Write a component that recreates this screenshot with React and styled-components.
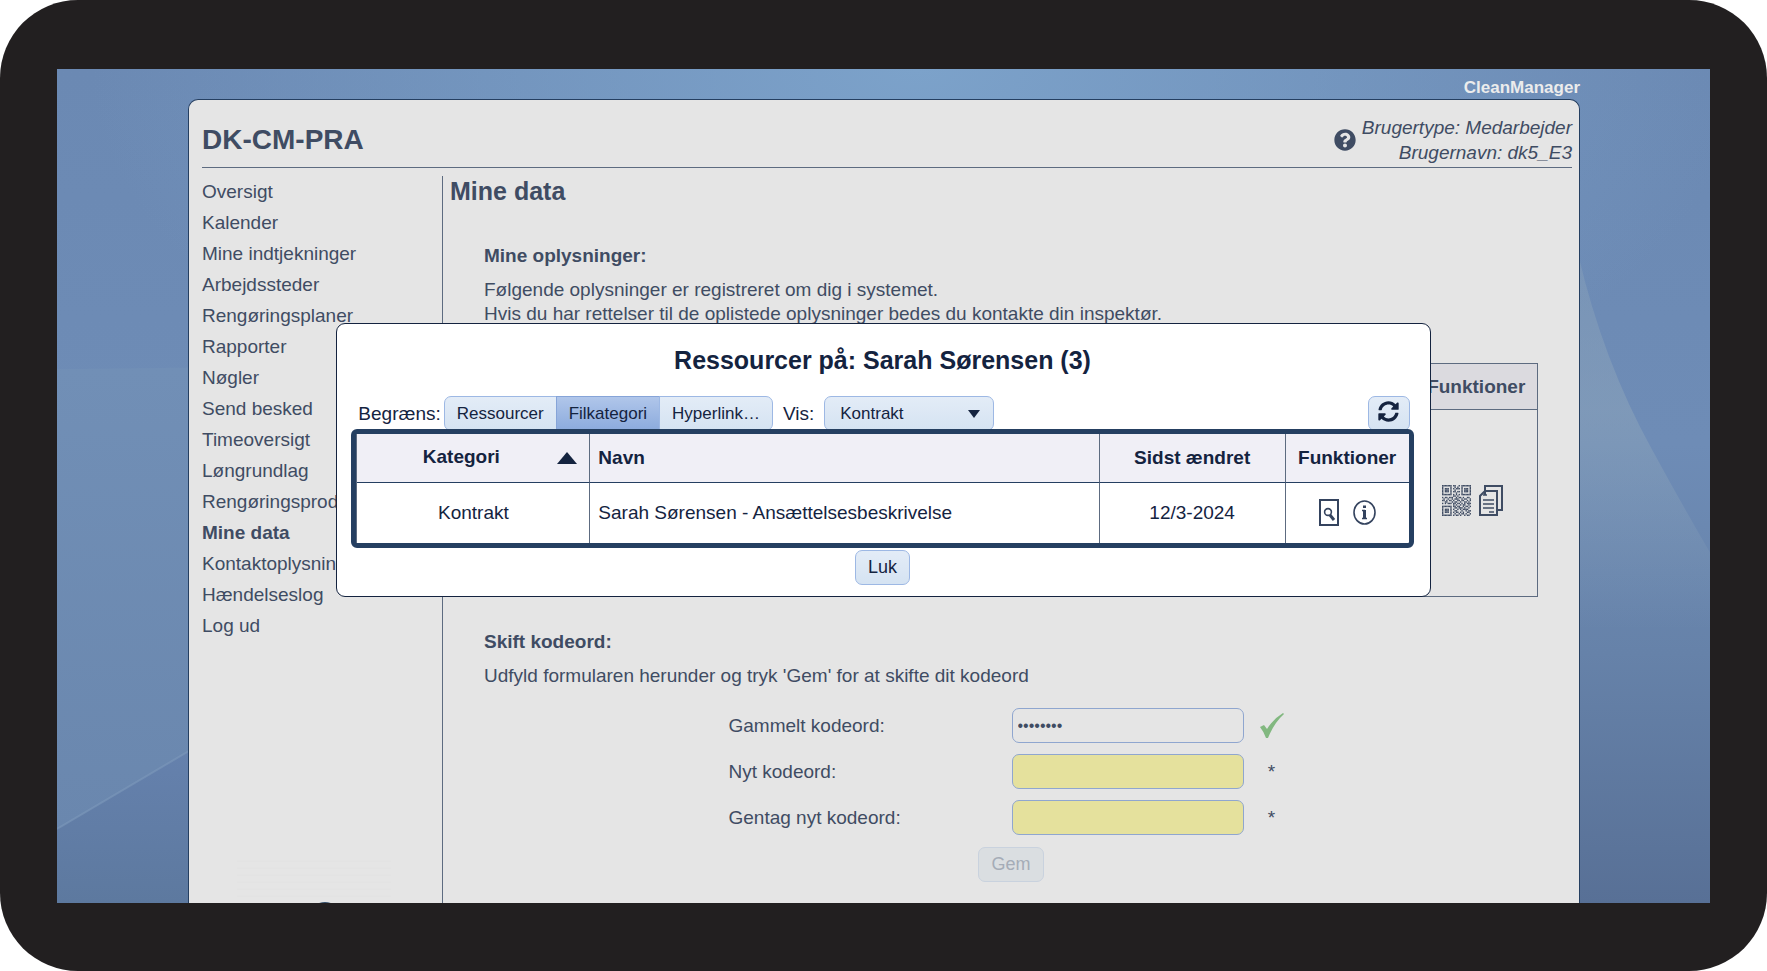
import React, { useState } from "react";
import styled, { createGlobalStyle, css } from "styled-components";
import { FaQuestionCircle, FaSyncAlt } from "react-icons/fa";

const COLOR = {
  BEZEL: "#221f20",
  PANEL: "#e5e5e5",
  NAVY: "#14233f",
  FRAME: "#253f61",
  DIMMED: "#3f4c63",
  ICON: "#34435e",
  LINE: "#5d6b80",
  BUTTON_BORDER: "#9db8e4",
};

const NAV_ITEMS = [
  "Oversigt",
  "Kalender",
  "Mine indtjekninger",
  "Arbejdssteder",
  "Rengøringsplaner",
  "Rapporter",
  "Nøgler",
  "Send besked",
  "Timeoversigt",
  "Løngrundlag",
  "Rengøringsprodukter",
  "Mine data",
  "Kontaktoplysninger",
  "Hændelseslog",
  "Log ud",
];

const FILTERS = ["Ressourcer", "Filkategori", "Hyperlink…"];

const RESOURCES = [
  {
    category: "Kontrakt",
    name: "Sarah Sørensen - Ansættelsesbeskrivelse",
    changed: "12/3-2024",
  },
];

// 1 = dark module
const QR_ROWS = [
  "111111101100101111111",
  "100000100101001000001",
  "101110101011101011101",
  "101110100100001011101",
  "101110101101101011101",
  "100000100010001000001",
  "111111101010101111111",
  "000000001101000000000",
  "101101110010110100110",
  "010010010111001011001",
  "110101101001101100101",
  "001100010110010011010",
  "101011101101101010111",
  "000000001010010110010",
  "111111101101100101101",
  "100000100110111010010",
  "101110101001010111100",
  "101110100110001001011",
  "101110101011010100110",
  "100000100100101101001",
  "111111101011010010110",
];

const Wallpaper = () => (
  <StyledWallpaper
    viewBox="0 0 1653 833"
    preserveAspectRatio="none"
    aria-hidden="true"
  >
    <defs>
      <linearGradient id="base" x1="0" y1="0" x2="0" y2="1">
        <stop offset="0" stopColor="#6b89b3" />
        <stop offset="0.45" stopColor="#6e8cb6" />
        <stop offset="0.7" stopColor="#6682a9" />
        <stop offset="1" stopColor="#587096" />
      </linearGradient>
      <radialGradient id="glow" cx="0.52" cy="0" r="0.5">
        <stop offset="0" stopColor="#7ca2ca" />
        <stop offset="1" stopColor="#7ca2ca" stopOpacity="0" />
      </radialGradient>
      <linearGradient id="band" x1="0" y1="299" x2="0" y2="760" gradientUnits="userSpaceOnUse">
        <stop offset="0" stopColor="#718fb6" />
        <stop offset="1" stopColor="#6a87ae" />
      </linearGradient>
      <linearGradient id="floor" x1="0" y1="682" x2="0" y2="833" gradientUnits="userSpaceOnUse">
        <stop offset="0" stopColor="#6581ad" />
        <stop offset="1" stopColor="#5d799f" />
      </linearGradient>
      <linearGradient id="ray" x1="0" y1="194" x2="0" y2="560" gradientUnits="userSpaceOnUse">
        <stop offset="0" stopColor="#8fa6bb" stopOpacity="0.35" />
        <stop offset="0.4" stopColor="#8fa6bb" stopOpacity="0.5" />
        <stop offset="1" stopColor="#8fa6bb" stopOpacity="0" />
      </linearGradient>
    </defs>
    <rect width="1653" height="833" fill="url(#base)" />
    <rect width="1653" height="833" fill="url(#glow)" />
    <path d="M0 300L300 296V620L0 759Z" fill="url(#band)" />
    <path d="M0 759L200 641V833H0Z" fill="url(#floor)" />
    <path d="M0 759L200 641" stroke="#7d99bb" strokeWidth="2" opacity="0.6" />
    <path d="M1520 180Q1545 290 1595 380Q1625 435 1653 483V560H1520Z" fill="url(#ray)" />
  </StyledWallpaper>
);

const QrIcon = () => (
  <svg width="29" height="31" viewBox="0 0 21 21" preserveAspectRatio="none">
    {QR_ROWS.map((row, y) =>
      [...row].map(
        (cell, x) =>
          cell === "1" && (
            <rect key={`${x}-${y}`} x={x} y={y} width="1" height="1" fill="currentColor" />
          )
      )
    )}
  </svg>
);

const CopyIcon = () => (
  <svg width="24" height="31" viewBox="0 0 24 31" fill="none" stroke="currentColor" strokeWidth="2">
    <path d="M6 10V1H23V25H18" />
    <path d="M6 6H18V30H1V11Z" />
    <path d="M4 10H8M4 15H15M4 19H15M4 23H15M10 27H15" strokeWidth="1.6" />
  </svg>
);

const PreviewIcon = () => (
  <svg width="20" height="27" viewBox="0 0 20 27" fill="none" stroke="currentColor">
    <rect x="1" y="1" width="18" height="25" strokeWidth="2" />
    <circle cx="9" cy="13" r="3.4" strokeWidth="1.6" />
    <path d="M11 16L15 21" strokeWidth="3" />
  </svg>
);

const InfoIcon = () => (
  <svg width="23" height="25" viewBox="0 0 23 25" fill="none" stroke="currentColor">
    <ellipse cx="11.5" cy="12.5" rx="10.5" ry="11.5" strokeWidth="1.6" />
    <path d="M9 10.5H12M9 18.5H14" strokeWidth="1.4" />
    <path d="M11.5 5.5V8M11.5 10V19" strokeWidth="3" />
  </svg>
);

const CheckMark = () => (
  <svg width="24" height="25" viewBox="0 0 24 25" role="img" aria-label="OK">
    <path d="M0 14L4 12L7 16Q13 6 23 0L24 1Q14 10 8 25H6Q4 19 0 14Z" fill="#82b880" />
  </svg>
);

const Nav = () => (
  <StyledSidebar>
    <StyledNavList>
      {NAV_ITEMS.map((item) => (
        <li key={item}>
          <StyledNavLink href="#" $active={item === "Mine data"}>
            {item}
          </StyledNavLink>
        </li>
      ))}
    </StyledNavList>
    <StyledLogo viewBox="0 0 154 44" aria-hidden="true">
      <path d="M0 2H154M0 9H154M0 16H154M0 23H154M0 30H154M0 37H154" stroke="#e2e2e2" />
      <circle cx="88" cy="59" r="16" fill="#344f6b" />
    </StyledLogo>
  </StyledSidebar>
);

const PasswordForm = () => (
  <StyledForm onSubmit={(event) => event.preventDefault()}>
    <StyledFormGrid>
      <label htmlFor="old">Gammelt kodeord:</label>
      <StyledInput id="old" type="password" defaultValue="kodeord1" />
      <StyledMark>
        <CheckMark />
      </StyledMark>
      <label htmlFor="new">Nyt kodeord:</label>
      <StyledInput id="new" type="password" $required />
      <StyledMark>*</StyledMark>
      <label htmlFor="repeat">Gentag nyt kodeord:</label>
      <StyledInput id="repeat" type="password" $required />
      <StyledMark>*</StyledMark>
    </StyledFormGrid>
    <StyledButton disabled>Gem</StyledButton>
  </StyledForm>
);

const ResourceDialog = () => {
  const [filter, setFilter] = useState("Filkategori");

  return (
    <StyledDialog role="dialog" aria-labelledby="dialog-title">
      <StyledDialogTitle id="dialog-title">
        Ressourcer på: Sarah Sørensen (3)
      </StyledDialogTitle>
      <StyledToolbar>
        <span>Begræns:</span>
        <StyledButtonGroup>
          {FILTERS.map((name) => (
            <StyledSegment
              key={name}
              type="button"
              $active={name === filter}
              onClick={() => setFilter(name)}
            >
              {name}
            </StyledSegment>
          ))}
        </StyledButtonGroup>
        <StyledShowLabel htmlFor="show">Vis:</StyledShowLabel>
        <StyledSelectWrapper>
          <StyledSelect id="show" defaultValue="Kontrakt">
            <option>Kontrakt</option>
          </StyledSelect>
          <StyledCaret viewBox="0 0 12 8" aria-hidden="true">
            <path d="M0 0H12L6 8Z" fill={COLOR.NAVY} />
          </StyledCaret>
        </StyledSelectWrapper>
        <StyledRefreshButton type="button" aria-label="Opdater">
          <FaSyncAlt size={21} />
        </StyledRefreshButton>
      </StyledToolbar>
      <StyledTableFrame>
        <StyledTable>
          <colgroup>
            <col width="233" />
            <col />
            <col width="186" />
            <col width="123" />
          </colgroup>
          <thead>
            <tr>
              <StyledTh>
                <StyledSortHeader>
                  <span>Kategori</span>
                  <svg width="20" height="12" viewBox="0 0 20 12">
                    <path d="M0 12L10 0L20 12Z" fill={COLOR.NAVY} />
                  </svg>
                </StyledSortHeader>
              </StyledTh>
              <StyledTh $left>Navn</StyledTh>
              <StyledTh>Sidst ændret</StyledTh>
              <StyledTh>Funktioner</StyledTh>
            </tr>
          </thead>
          <tbody>
            {RESOURCES.map(({ category, name, changed }) => (
              <tr key={name}>
                <StyledTd>{category}</StyledTd>
                <StyledTd $left>{name}</StyledTd>
                <StyledTd>{changed}</StyledTd>
                <StyledTd>
                  <StyledIconRow $gap={14}>
                    <StyledIconButton type="button" aria-label="Vis">
                      <PreviewIcon />
                    </StyledIconButton>
                    <StyledIconButton type="button" aria-label="Info">
                      <InfoIcon />
                    </StyledIconButton>
                  </StyledIconRow>
                </StyledTd>
              </tr>
            ))}
          </tbody>
        </StyledTable>
      </StyledTableFrame>
      <StyledButton type="button">Luk</StyledButton>
    </StyledDialog>
  );
};

const App = () => (
  <>
    <GlobalStyle />
    <StyledDevice>
      <StyledScreen>
        <Wallpaper />
        <StyledPage>
          <StyledBrand>CleanManager</StyledBrand>
          <StyledPanel>
            <StyledHeader>
              <StyledCompany>DK-CM-PRA</StyledCompany>
              <StyledUser>
                <FaQuestionCircle size={22} />
                <StyledUserText>
                  Brugertype: Medarbejder
                  <br />
                  Brugernavn: dk5_E3
                </StyledUserText>
              </StyledUser>
            </StyledHeader>
            <StyledBody>
              <Nav />
              <StyledMain>
                <StyledPageTitle>Mine data</StyledPageTitle>
                <StyledSection>
                  <StyledHeading>Mine oplysninger:</StyledHeading>
                  <StyledText>
                    Følgende oplysninger er registreret om dig i systemet.
                    <br />
                    Hvis du har rettelser til de oplistede oplysninger bedes du
                    kontakte din inspektør.
                  </StyledText>
                  <StyledDataTable>
                    <colgroup>
                      <col />
                      <col width="122" />
                    </colgroup>
                    <thead>
                      <tr>
                        <th />
                        <th>Funktioner</th>
                      </tr>
                    </thead>
                    <tbody>
                      <tr>
                        <td />
                        <td>
                          <StyledIconRow $gap={8}>
                            <QrIcon />
                            <CopyIcon />
                          </StyledIconRow>
                        </td>
                      </tr>
                    </tbody>
                  </StyledDataTable>
                  <StyledHeading>Skift kodeord:</StyledHeading>
                  <StyledText>
                    Udfyld formularen herunder og tryk 'Gem' for at skifte dit
                    kodeord
                  </StyledText>
                  <PasswordForm />
                </StyledSection>
              </StyledMain>
            </StyledBody>
          </StyledPanel>
        </StyledPage>
        <StyledOverlay>
          <ResourceDialog />
        </StyledOverlay>
      </StyledScreen>
    </StyledDevice>
  </>
);

export default App;

const GlobalStyle = createGlobalStyle`
  * {
    box-sizing: border-box;
  }

  body {
    margin: 0;
    background: #fff;
    font: 19px/24px "Liberation Sans", Arial, sans-serif;
    color: ${COLOR.DIMMED};
  }

  button, input, select {
    font-family: inherit;
  }

  svg {
    display: block;
    flex-shrink: 0;
  }
`;

const StyledDevice = styled.div`
  display: flex;
  height: 100vh;
  padding: 69px 57px 68px;
  border-radius: 78px;
  background: ${COLOR.BEZEL};
`;

const StyledScreen = styled.div`
  position: relative;
  display: flex;
  flex: 1;
  overflow: hidden;
`;

const StyledWallpaper = styled.svg`
  position: absolute;
  width: 100%;
  height: 100%;
`;

const StyledPage = styled.div`
  position: relative;
  display: flex;
  flex: 1;
  flex-direction: column;
  padding: 7px 130px 0 131px;
`;

const StyledBrand = styled.div`
  align-self: flex-end;
  color: #ececec;
  font-size: 17px;
  font-weight: bold;
  line-height: 23px;
`;

const StyledPanel = styled.div`
  display: flex;
  flex: 1;
  flex-direction: column;
  min-height: 0;
  border: 1px solid ${COLOR.FRAME};
  border-bottom: 0;
  border-radius: 10px 10px 0 0;
  background: ${COLOR.PANEL};
`;

const StyledHeader = styled.header`
  display: flex;
  align-items: center;
  justify-content: space-between;
  height: 68px;
  margin: 0 7px 8px 13px;
  padding-top: 13px;
  border-bottom: 1px solid ${COLOR.LINE};
`;

const StyledCompany = styled.div`
  font-size: 28px;
  font-weight: bold;
`;

const StyledUser = styled.div`
  display: flex;
  align-items: center;
  gap: 6px;
`;

const StyledUserText = styled.div`
  font-style: italic;
  line-height: 25px;
  text-align: right;
`;

const StyledBody = styled.div`
  display: flex;
  flex: 1;
  min-height: 0;
`;

const StyledSidebar = styled.nav`
  display: flex;
  flex-direction: column;
  justify-content: space-between;
  width: 254px;
  padding-left: 13px;
  border-right: 1px solid ${COLOR.LINE};
`;

const StyledNavList = styled.ul`
  margin: 0;
  padding: 0;
  list-style: none;
`;

const StyledNavLink = styled.a`
  display: block;
  color: inherit;
  font-weight: ${({ $active }) => ($active ? "bold" : "normal")};
  line-height: 31px;
  text-decoration: none;
`;

const StyledLogo = styled.svg`
  width: 154px;
  height: 44px;
  margin-left: 35px;
`;

const StyledMain = styled.main`
  flex: 1;
  padding: 0 41px 0 7px;
`;

const StyledPageTitle = styled.h1`
  margin: 0;
  font-size: 25px;
  line-height: 30px;
`;

const StyledSection = styled.section`
  margin: 38px 0 0 34px;
`;

const StyledHeading = styled.h2`
  margin: 0 0 10px;
  font-size: 19px;
  line-height: 24px;
`;

const StyledText = styled.p`
  margin: 0;
`;

const StyledDataTable = styled.table`
  width: 100%;
  height: 234px;
  margin: 37px 0 33px;
  border: 1px solid ${COLOR.LINE};
  border-collapse: collapse;
  table-layout: fixed;

  th {
    height: 46px;
    padding: 0;
    border-bottom: 1px solid ${COLOR.LINE};
    background: #dbdadf;
  }

  td {
    padding: 0 8px 6px 0;
  }
`;

const StyledForm = styled.form`
  display: flex;
  flex-direction: column;
  align-items: center;
  gap: 12px;
  margin-top: 20px;
`;

const StyledFormGrid = styled.div`
  display: grid;
  grid-template-columns: 283px 232px 50px;
  align-items: center;
  gap: 11px 0;
`;

const StyledInput = styled.input`
  height: 35px;
  padding: 0 5px;
  border: 1px solid #8fa6cf;
  border-radius: 7px;
  background: ${({ $required }) => ($required ? "#e5e19d" : "transparent")};
  color: ${COLOR.DIMMED};
  font-size: 16px;
`;

const StyledMark = styled.span`
  display: flex;
  justify-content: center;
  padding-left: 6px;
`;

const buttonLook = css`
  height: 35px;
  border: 1px solid ${COLOR.BUTTON_BORDER};
  border-radius: 7px;
  background: linear-gradient(#e3ecf7, #d5e3f2);
  color: ${COLOR.NAVY};
  font-size: 17px;
`;

const StyledButton = styled.button`
  ${buttonLook}
  padding: 0 12px;
  font-size: 18px;

  &:disabled {
    border-color: #c9d2de;
    background: #dadee1;
    color: #a5acb7;
  }
`;

const StyledOverlay = styled.div`
  position: absolute;
  inset: 0;
  display: flex;
  align-items: flex-start;
  justify-content: center;
  padding-top: 254px;
`;

const StyledDialog = styled.div`
  display: flex;
  flex-direction: column;
  align-items: center;
  width: 66.2%;
  padding: 21px 16px 11px 14px;
  border: 1px solid ${COLOR.NAVY};
  border-radius: 9px;
  background: #fff;
  color: ${COLOR.NAVY};
`;

const StyledDialogTitle = styled.h2`
  margin: 0 0 21px;
  font-size: 25px;
  line-height: 30px;
`;

const StyledToolbar = styled.div`
  display: flex;
  align-self: stretch;
  align-items: center;
  margin: 0 4px -2px 7px;
`;

const StyledButtonGroup = styled.div`
  display: flex;
  margin: 0 10px 0 3px;
`;

const StyledSegment = styled.button`
  ${buttonLook}
  padding: 0 12px;
  border-radius: 0;
  ${({ $active }) =>
    $active &&
    css`
      border-color: #86a4d8;
      background: linear-gradient(#b0c6ea, #8cabdd);
    `}

  & + & {
    margin-left: -1px;
  }

  &:first-child {
    border-radius: 7px 0 0 7px;
  }

  &:last-child {
    border-radius: 0 7px 7px 0;
  }
`;

const StyledShowLabel = styled.label`
  margin-right: 10px;
`;

const StyledSelectWrapper = styled.div`
  position: relative;
`;

const StyledSelect = styled.select`
  ${buttonLook}
  width: 170px;
  padding: 0 15px;
  appearance: none;
`;

const StyledCaret = styled.svg`
  position: absolute;
  top: 14px;
  right: 14px;
  width: 12px;
  height: 8px;
  pointer-events: none;
`;

const StyledRefreshButton = styled.button`
  ${buttonLook}
  display: flex;
  justify-content: center;
  width: 42px;
  margin-left: auto;
  padding: 4px 0 0;
`;

const StyledTableFrame = styled.div`
  position: relative;
  align-self: stretch;
  margin-bottom: 2px;
  border: 5px solid ${COLOR.FRAME};
  border-radius: 6px;
  background: #fff;
`;

const StyledTable = styled.table`
  width: 100%;
  border-spacing: 0;
  table-layout: fixed;
  border-left: 1px solid ${COLOR.LINE};
`;

const cellLook = css`
  padding: 0 8px;
  text-align: ${({ $left }) => ($left ? "left" : "center")};

  &:not(:last-child) {
    border-right: 1px solid ${COLOR.LINE};
  }
`;

const StyledTh = styled.th`
  ${cellLook}
  height: 49px;
  border-bottom: 1px solid ${COLOR.FRAME};
  background: #f0eff6;
`;

const StyledTd = styled.td`
  ${cellLook}
  height: 60px;
`;

const StyledSortHeader = styled.div`
  display: flex;
  align-items: center;
  padding-right: 4px;

  span {
    flex: 1;
    padding-bottom: 3px;
  }
`;

const StyledIconRow = styled.div`
  display: flex;
  align-items: center;
  justify-content: center;
  gap: ${({ $gap }) => $gap}px;
`;

const StyledIconButton = styled.button`
  padding: 0 0 2px;
  border: 0;
  background: none;
  color: ${COLOR.ICON};
`;
